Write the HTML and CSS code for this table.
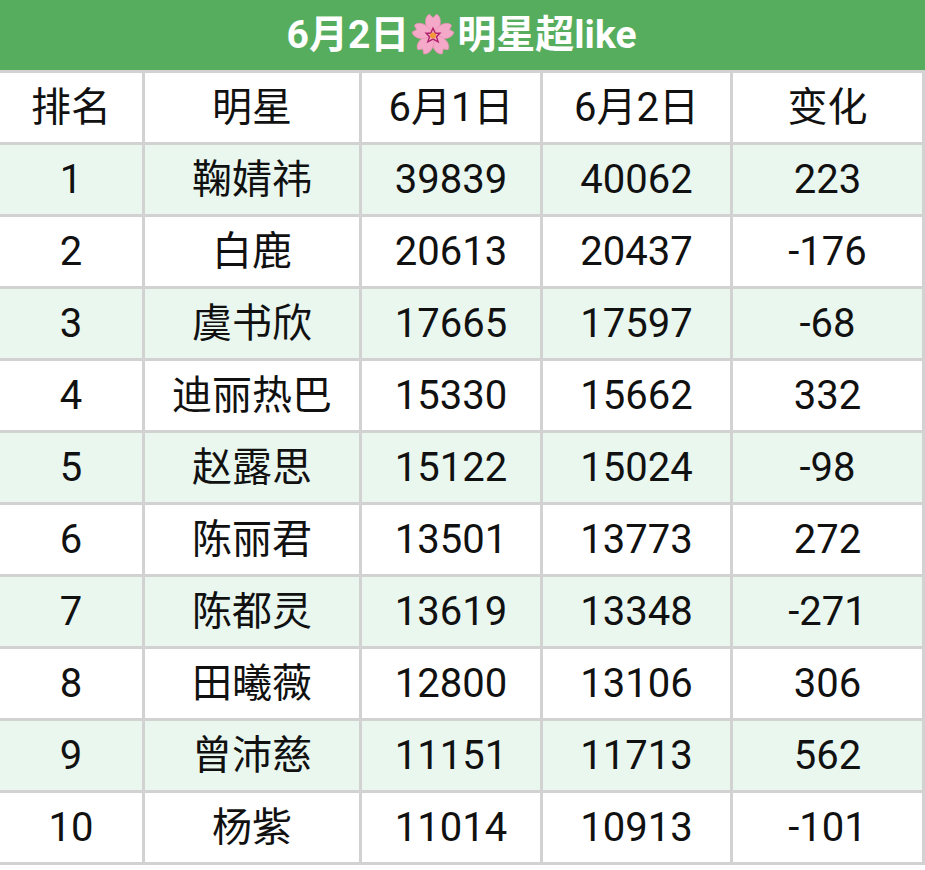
FILE: index.html
```html
<!DOCTYPE html>
<html lang="zh">
<head>
<meta charset="utf-8">
<link rel="stylesheet" href="styles.css">
</head>
<body>
<div class="title">
  <span>6月2日</span>
  <svg class="flower" viewBox="0 0 40 40" width="46" height="46">
    <g fill="#f5a9c9" stroke="#ec8fb6" stroke-width="0.6">
      <g id="p"><path d="M20 20 C12 14 12 4 17 2 L20 5 L23 2 C28 4 28 14 20 20 Z"/></g>
      <use href="#p" transform="rotate(72 20 20)"/>
      <use href="#p" transform="rotate(144 20 20)"/>
      <use href="#p" transform="rotate(216 20 20)"/>
      <use href="#p" transform="rotate(288 20 20)"/>
    </g>
    <path d="M20 14 L22 18.5 L26 18.5 L23 21.5 L24.5 26 L20 23.5 L15.5 26 L17 21.5 L14 18.5 L18 18.5 Z" fill="none" stroke="#b0226a" stroke-width="1.2"/>
    <circle cx="20" cy="20.5" r="2.6" fill="#f29a3a"/>
  </svg>
  <span>明星超like</span>
</div>
<div class="grid">
  <div class="cell head">排名</div><div class="cell head">明星</div><div class="cell head">6月1日</div><div class="cell head">6月2日</div><div class="cell head">变化</div>
  <div class="cell alt">1</div><div class="cell alt">鞠婧祎</div><div class="cell alt">39839</div><div class="cell alt">40062</div><div class="cell alt">223</div>
  <div class="cell">2</div><div class="cell">白鹿</div><div class="cell">20613</div><div class="cell">20437</div><div class="cell">-176</div>
  <div class="cell alt">3</div><div class="cell alt">虞书欣</div><div class="cell alt">17665</div><div class="cell alt">17597</div><div class="cell alt">-68</div>
  <div class="cell">4</div><div class="cell">迪丽热巴</div><div class="cell">15330</div><div class="cell">15662</div><div class="cell">332</div>
  <div class="cell alt">5</div><div class="cell alt">赵露思</div><div class="cell alt">15122</div><div class="cell alt">15024</div><div class="cell alt">-98</div>
  <div class="cell">6</div><div class="cell">陈丽君</div><div class="cell">13501</div><div class="cell">13773</div><div class="cell">272</div>
  <div class="cell alt">7</div><div class="cell alt">陈都灵</div><div class="cell alt">13619</div><div class="cell alt">13348</div><div class="cell alt">-271</div>
  <div class="cell">8</div><div class="cell">田曦薇</div><div class="cell">12800</div><div class="cell">13106</div><div class="cell">306</div>
  <div class="cell alt">9</div><div class="cell alt">曾沛慈</div><div class="cell alt">11151</div><div class="cell alt">11713</div><div class="cell alt">562</div>
  <div class="cell">10</div><div class="cell">杨紫</div><div class="cell">11014</div><div class="cell">10913</div><div class="cell">-101</div>
</div>
</body>
</html>
```
FILE: styles.css
```css
html, body {
  margin: 0;
  padding: 0;
  background: #ffffff;
}
body {
  width: 925px;
  height: 870px;
  overflow: hidden;
  font-family: Roboto, "Noto Sans CJK SC", sans-serif;
}
.title {
  height: 70px;
  background: #57ad5e;
  color: #ffffff;
  font-weight: 700;
  font-size: 39px;
  display: flex;
  align-items: center;
  justify-content: center;
  gap: 1px;
  box-sizing: border-box;
  padding-right: 2px;
}
.title span {
  line-height: 1;
}
.flower {
  display: block;
  margin: 0;
}
.grid {
  display: grid;
  grid-template-columns: 142px 214px 178px 187px 189px;
  grid-auto-rows: 69px;
  gap: 3px;
  padding: 3px 3px 3px 0;
  background: #d2d2d2;
  width: 925px;
  box-sizing: border-box;
}
.cell {
  background: #ffffff;
  color: #111111;
  font-size: 40px;
  display: flex;
  align-items: center;
  justify-content: center;
  line-height: 1;
}
.cell.alt {
  background: #e9f7ef;
}
```
